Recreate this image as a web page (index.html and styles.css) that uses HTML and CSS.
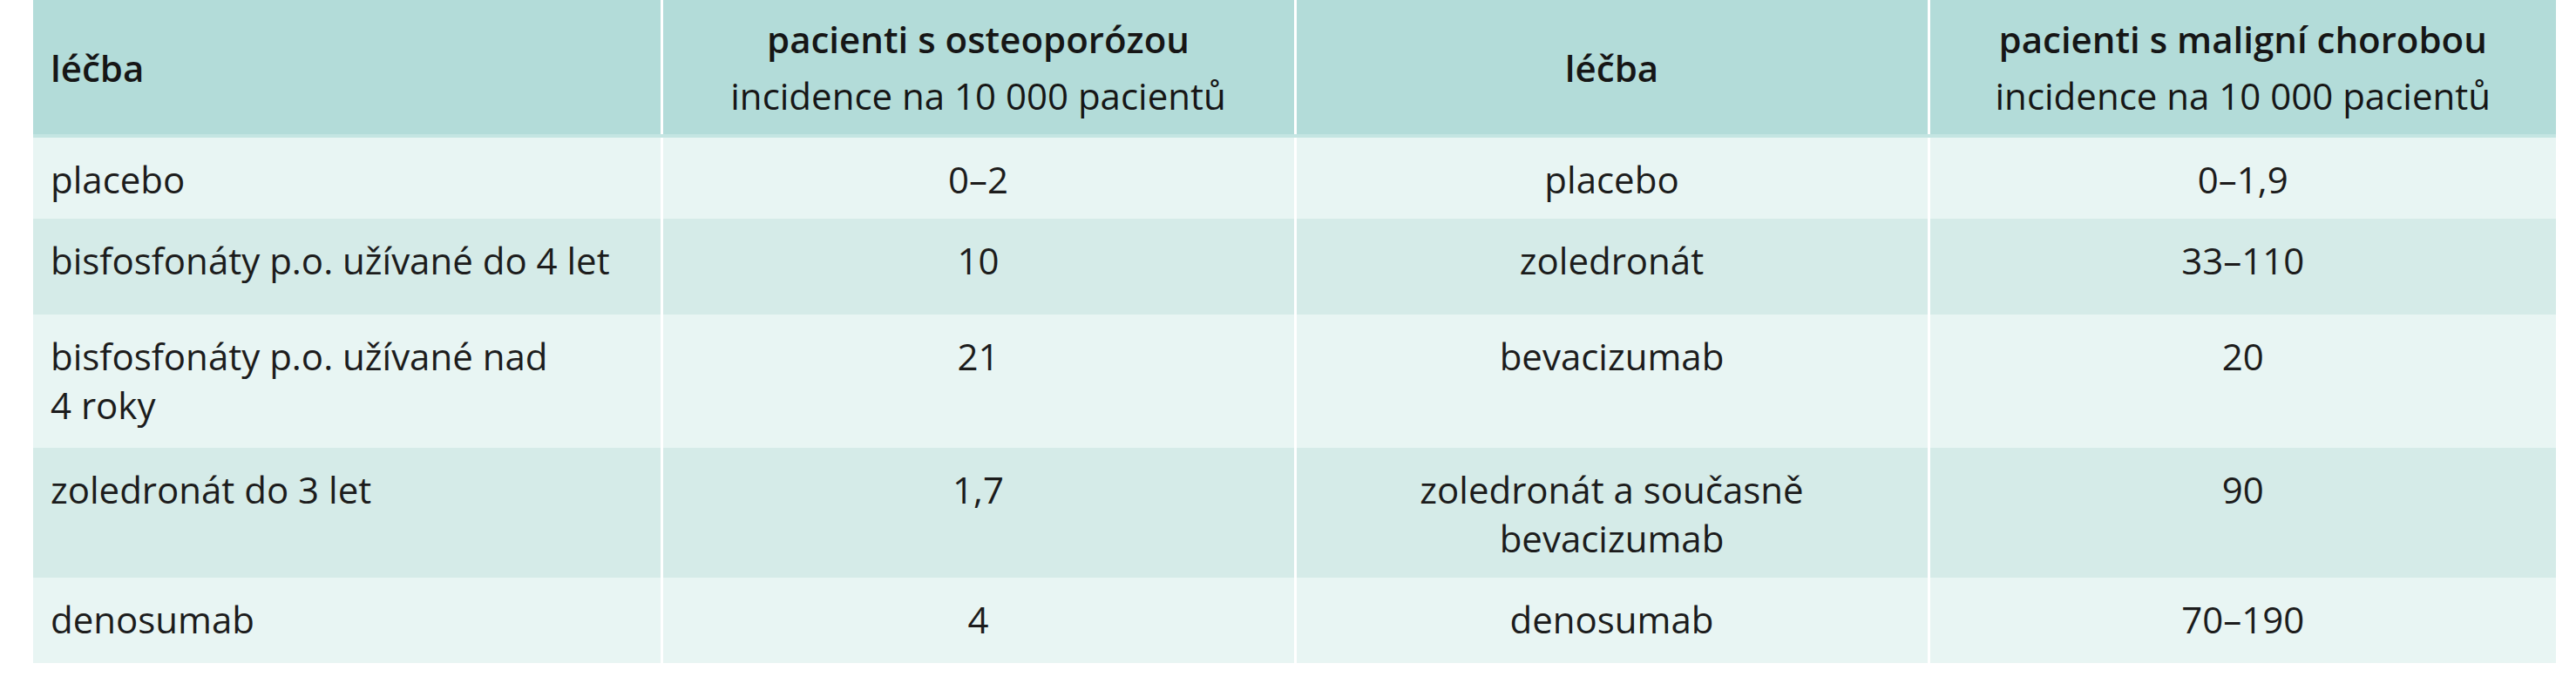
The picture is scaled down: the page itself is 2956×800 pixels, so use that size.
FILE: index.html
```html
<!DOCTYPE html>
<html lang="cs">
<head>
<meta charset="utf-8">
<title>Incidence</title>
<link rel="stylesheet" href="styles.css">
</head>
<body>
<table class="grid">
  <colgroup>
    <col class="c1">
    <col class="c2">
    <col class="c3">
    <col class="c4">
  </colgroup>
  <thead>
    <tr class="head">
      <th class="left">léčba</th>
      <th><span class="strong">pacienti s osteoporózou</span><br><span class="sub">incidence na 10&nbsp;000 pacientů</span></th>
      <th>léčba</th>
      <th><span class="strong">pacienti s maligní chorobou</span><br><span class="sub">incidence na 10&nbsp;000 pacientů</span></th>
    </tr>
  </thead>
  <tbody>
    <tr class="r1 odd">
      <td class="left">placebo</td>
      <td>0–2</td>
      <td>placebo</td>
      <td>0–1,9</td>
    </tr>
    <tr class="r2 even">
      <td class="left">bisfosfonáty p.o. užívané do 4 let</td>
      <td>10</td>
      <td>zoledronát</td>
      <td>33–110</td>
    </tr>
    <tr class="r3 odd">
      <td class="left">bisfosfonáty p.o. užívané nad<br>4&nbsp;roky</td>
      <td>21</td>
      <td>bevacizumab</td>
      <td>20</td>
    </tr>
    <tr class="r4 even">
      <td class="left">zoledronát do 3 let</td>
      <td>1,7</td>
      <td>zoledronát a současně<br>bevacizumab</td>
      <td>90</td>
    </tr>
    <tr class="r5 odd">
      <td class="left">denosumab</td>
      <td>4</td>
      <td>denosumab</td>
      <td>70–190</td>
    </tr>
  </tbody>
</table>
</body>
</html>
```
FILE: styles.css
```css
html, body {
  margin: 0;
  padding: 0;
  background: #ffffff;
}

body {
  font-family: "Open Sans", "Noto Sans", sans-serif;
  font-size: 42px;
  color: #1c1c1c;
}

.grid {
  margin-left: 38px;
  width: 2895px;
  table-layout: fixed;
  border-collapse: collapse;
  border-spacing: 0;
}

.c1 { width: 721px; }
.c2 { width: 727px; }
.c3 { width: 727px; }
.c4 { width: 720px; }

.grid th,
.grid td {
  padding: 0 20px;
  text-align: center;
  border-left: 3px solid #ffffff;
}

.grid th:first-child,
.grid td:first-child {
  border-left: 0;
}

.grid .left {
  text-align: left;
  padding-left: 20px;
}

.head {
  height: 156px;
  background: #b3dcd9;
}

.head th {
  vertical-align: middle;
  line-height: 65px;
  font-weight: 600;
  color: #161616;
  border-bottom: 4px solid #c4e5e2;
}

.head .sub {
  font-weight: 400;
}

.grid td {
  vertical-align: top;
  line-height: 56px;
  padding-top: 20px;
  padding-bottom: 0;
}

.odd { background: #e8f5f3; }
.even { background: #d5ebe8; }

.r1 { height: 95px; }
.r2 { height: 110px; }
.r3 { height: 153px; }
.r4 { height: 149px; }
.r5 { height: 98px; }
```
